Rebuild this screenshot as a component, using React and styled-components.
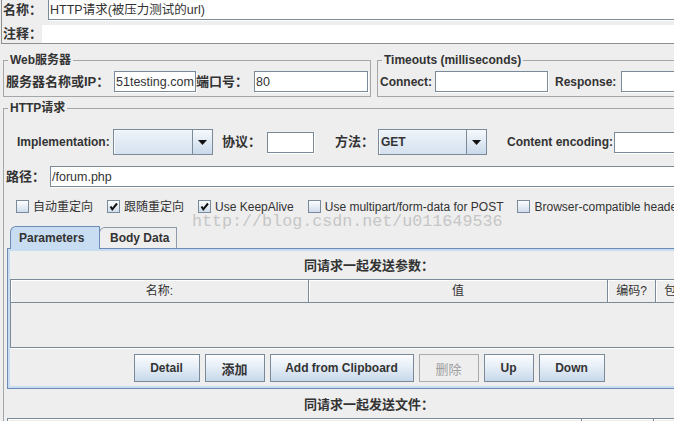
import React from 'react';
import styled, { createGlobalStyle } from 'styled-components';

const GlobalStyle = createGlobalStyle`
  html, body { margin: 0; padding: 0; background: #eeeeee; overflow: hidden; }
  body {
    font-family: "Liberation Sans", Arial, "Noto Sans CJK SC", sans-serif;
    color: #333333;
    font-size: 12px;
    line-height: 14px;
  }
  * { box-sizing: border-box; }
`;

const Page = styled.div`
  position: relative;
  width: 738px;
  height: 421px;
  overflow: hidden;
`;

const TopBox = styled.div`
  margin: -1px 0 0 1px;
  border-left: 1px solid #8e8f8f;
  border-bottom: 1px solid #8e8f8f;
  display: flex;
  flex-direction: column;
  gap: 5px;
`;

const Row = styled.div`
  display: flex;
  align-items: center;
  height: ${p => p.$h}px;
  margin-top: ${p => p.$mt || 0}px;
  padding-left: ${p => p.$pl || 0}px;
  gap: ${p => p.$gap || 0}px;
`;

const Label = styled.span`
  flex: none;
  width: ${p => (p.$w ? `${p.$w}px` : 'auto')};
  margin-left: ${p => p.$ml || 0}px;
  font-weight: bold;
  font-size: ${p => p.$fs || 12}px;
  line-height: 16px;
  color: #333333;
  white-space: nowrap;
`;

const Field = styled.div`
  height: ${p => p.$h || 21}px;
  width: ${p => (p.$w ? `${p.$w}px` : 'auto')};
  flex: ${p => (p.$w ? 'none' : '1')};
  min-width: 0;
  border: 1px solid #7a8a99;
  background: #ffffff;
  display: flex;
  align-items: center;
  padding-left: 1px;
  font-size: 12.5px;
  line-height: 16px;
  color: #333333;
  white-space: nowrap;
  overflow: hidden;
  box-shadow: 1px 1px 0 #ffffff;
`;

const Blank = styled.div`
  flex: 1;
  height: 100%;
  background: #ffffff;
`;

const ServerRow = styled.div`
  display: flex;
  gap: 6px;
  margin: 10px 0 0 3px;
  width: 732px;
`;

const Group = styled.fieldset`
  margin: 0;
  min-width: 0;
  padding: 4px 2px 4px;
  border: 1px solid #a4a6a8;
  width: ${p => (p.$w ? `${p.$w}px` : 'auto')};
  flex: ${p => (p.$w ? 'none' : '1')};
`;

const Legend = styled.legend`
  padding: 0 2px;
  margin-left: 2px;
  font-weight: bold;
  font-size: 12px;
  line-height: 13px;
  color: #333333;
`;

const HttpGroup = styled.fieldset`
  margin: 5px 0 0 3px;
  width: 732px;
  min-width: 0;
  padding: 0 2px;
  border: 1px solid #a4a6a8;
  height: 400px;
`;

const Combo = styled.div`
  flex: none;
  width: ${p => p.$w}px;
  height: 26px;
  border: 1px solid #7a8a99;
  display: flex;
  background: linear-gradient(to bottom, #eef3f9, #d6e2ef);
`;

const ComboText = styled.div`
  flex: 1;
  display: flex;
  align-items: center;
  padding-left: 2px;
  font-weight: bold;
  font-size: 12px;
  color: #333333;
  border-right: 1px solid #7a8a99;
  box-shadow: inset 1px 1px 0 #f7fafd;
`;

const ComboArrow = styled.div`
  width: 19px;
  display: flex;
  align-items: center;
  justify-content: center;
  background: linear-gradient(to bottom, #f6f9fc, #c9d9ea);
`;

const CheckItem = styled.label`
  display: flex;
  align-items: center;
  gap: 4px;
  font-size: 12px;
  color: #333333;
  white-space: nowrap;
`;

const Box = styled.span`
  width: 13px;
  height: 13px;
  border: 1px solid #7a8a99;
  background: linear-gradient(to bottom, #fdfeff, #cfdcec);
  display: inline-flex;
  align-items: center;
  justify-content: center;
`;

const Watermark = styled.div`
  position: absolute;
  left: 192px;
  top: 213px;
  font-family: "Liberation Mono", "Courier New", monospace;
  font-size: 16.7px;
  line-height: 17px;
  color: #c6c6c6;
  white-space: nowrap;
  pointer-events: none;
`;

const Tabs = styled.div`
  margin: 11px 1px 0;
`;

const TabStrip = styled.div`
  display: flex;
  align-items: flex-end;
  height: 22px;
  padding-left: 3px;
`;

const Tab = styled.div`
  position: relative;
  z-index: ${p => (p.$active ? 1 : 0)};
  width: ${p => p.$w}px;
  height: ${p => (p.$active ? 23 : 21)}px;
  margin-bottom: ${p => (p.$active ? -1 : 0)}px;
  margin-left: ${p => (p.$active ? 0 : -1)}px;
  border: 1px solid ${p => (p.$active ? '#6d8bb5' : '#8e9aaa')};
  border-bottom: none;
  border-top-left-radius: 6px;
  background: ${p => (p.$active ? '#c8ddf2' : '#eeeeee')};
  padding-left: ${p => p.$pl}px;
  padding-bottom: ${p => (p.$active ? 1 : 0)}px;
  font-weight: bold;
  font-size: 12px;
  color: #333333;
  display: flex;
  align-items: center;
`;

const TabPanel = styled.div`
  border: 1px solid #6d8bb5;
  box-shadow: inset 0 0 0 2px #c8ddf2;
  padding: 2px 2px 6px;
`;

const SectionTitle = styled.div`
  height: ${p => p.$h}px;
  padding-top: 2px;
  display: flex;
  align-items: center;
  justify-content: center;
  font-weight: bold;
  font-size: 13px;
  color: #333333;
`;

const TableBox = styled.div`
  height: 69px;
  border-top: 1px solid #7a8a99;
  border-left: 1px solid #7a8a99;
  border-bottom: 1px solid #7a8a99;
  box-shadow: 0 1px 0 #ffffff;
  display: flex;
  flex-direction: column;
`;

const HeaderRow = styled.div`
  display: grid;
  grid-template-columns: ${p => p.$cols};
  height: 23px;
  border-bottom: 1px solid #7a8a99;
`;

const HeadCell = styled.div`
  border-right: 1px solid #7a8a99;
  box-shadow: inset 1px 1px 0 #ffffff;
  display: flex;
  align-items: center;
  justify-content: center;
  font-size: 12px;
  color: #333333;
  white-space: nowrap;
  overflow: hidden;
`;

const ButtonBar = styled.div`
  display: flex;
  justify-content: center;
  gap: 5px;
  margin-top: 6px;
`;

const Button = styled.button`
  flex: none;
  width: ${p => p.$w}px;
  height: 28px;
  padding: 0;
  border: 1px solid #7a8a99;
  background: linear-gradient(to bottom, #fbfcfe 0%, #e6eef7 45%, #c7d8eb 100%);
  font-family: "Liberation Sans", Arial, "Noto Sans CJK SC", sans-serif;
  font-weight: bold;
  font-size: ${p => p.$fs || 12}px;
  color: #333333;
  &:disabled {
    background: #eeeeee;
    border-color: #ababab;
    color: #a0a0a0;
    font-weight: normal;
  }
`;

const FilesTable = styled.div`
  margin: 0 1px;
  border-top: 1px solid #7a8a99;
  border-left: 1px solid #7a8a99;
  height: 30px;
`;

const Tri = () => (
  <svg width="9" height="5" viewBox="0 0 9 5">
    <polygon points="0,0 9,0 4.5,5" fill="#111" />
  </svg>
);

const Check = ({ on, children }) => (
  <CheckItem>
    <Box>
      {on && (
        <svg width="9" height="9" viewBox="0 0 9 9">
          <path d="M1.5 4.5 L3.3 7.3 L8 1.5" stroke="#111" strokeWidth="2" fill="none" />
        </svg>
      )}
    </Box>
    {children}
  </CheckItem>
);

export default function App() {
  return (
    <>
      <GlobalStyle />
      <Page>
        <TopBox>
          <Row $h={21} $pl={1}>
            <Label $w={45} $fs={13}>名称：</Label>
            <Field>HTTP请求(被压力测试的url)</Field>
          </Row>
          <Row $h={18} $pl={1}>
            <Label $w={39} $fs={13}>注释：</Label>
            <Blank />
          </Row>
        </TopBox>

        <ServerRow>
          <Group $w={368}>
            <Legend>Web服务器</Legend>
            <Row $h={21}>
              <Label $w={108} $fs={13}>服务器名称或IP：</Label>
              <Field $w={82}>51testing.com</Field>
              <Label $w={58} $fs={13}>端口号：</Label>
              <Field>80</Field>
            </Row>
          </Group>
          <Group>
            <Legend>Timeouts (milliseconds)</Legend>
            <Row $h={21}>
              <Label $w={55}>Connect:</Label>
              <Field $w={113} />
              <Label $w={66} $ml={7}>Response:</Label>
              <Field />
            </Row>
          </Group>
        </ServerRow>

        <HttpGroup>
          <Legend>HTTP请求</Legend>
          <Row $h={26} $mt={14} $pl={11}>
            <Label $w={96}>Implementation:</Label>
            <Combo $w={100}>
              <ComboText />
              <ComboArrow><Tri /></ComboArrow>
            </Combo>
            <Label $w={45} $ml={9} $fs={13}>协议：</Label>
            <Field $w={47} />
            <Label $w={43} $ml={21} $fs={13}>方法：</Label>
            <Combo $w={109}>
              <ComboText>GET</ComboText>
              <ComboArrow><Tri /></ComboArrow>
            </Combo>
            <Label $w={107} $ml={20}>Content encoding:</Label>
            <Field />
          </Row>
          <Row $h={21} $mt={11}>
            <Label $w={44} $fs={13}>路径：</Label>
            <Field>/forum.php</Field>
          </Row>
          <Row $h={17} $mt={11} $pl={10} $gap={14}>
            <Check>自动重定向</Check>
            <Check on>跟随重定向</Check>
            <Check on>Use KeepAlive</Check>
            <Check>Use multipart/form-data for POST</Check>
            <Check>Browser-compatible headers</Check>
          </Row>

          <Tabs>
            <TabStrip>
              <Tab $active $w={90} $pl={8}>Parameters</Tab>
              <Tab $w={78} $pl={10}>Body Data</Tab>
            </TabStrip>
            <TabPanel>
              <SectionTitle $h={28}>同请求一起发送参数：</SectionTitle>
              <TableBox>
                <HeaderRow $cols="298px 299px 48px 1fr">
                  <HeadCell>名称:</HeadCell>
                  <HeadCell>值</HeadCell>
                  <HeadCell>编码?</HeadCell>
                  <HeadCell>包含等于?</HeadCell>
                </HeaderRow>
              </TableBox>
              <ButtonBar>
                <Button $w={66}>Detail</Button>
                <Button $w={60} $fs={13}>添加</Button>
                <Button $w={144}>Add from Clipboard</Button>
                <Button $w={60} $fs={13} disabled>删除</Button>
                <Button $w={50}>Up</Button>
                <Button $w={66}>Down</Button>
              </ButtonBar>
            </TabPanel>
          </Tabs>

          <SectionTitle $h={29}>同请求一起发送文件：</SectionTitle>
          <FilesTable>
            <HeaderRow $cols="574px 72px 1fr">
              <HeadCell />
              <HeadCell />
              <HeadCell />
            </HeaderRow>
          </FilesTable>
        </HttpGroup>

        <Watermark>http://blog.csdn.net/u011649536</Watermark>
      </Page>
    </>
  );
}
